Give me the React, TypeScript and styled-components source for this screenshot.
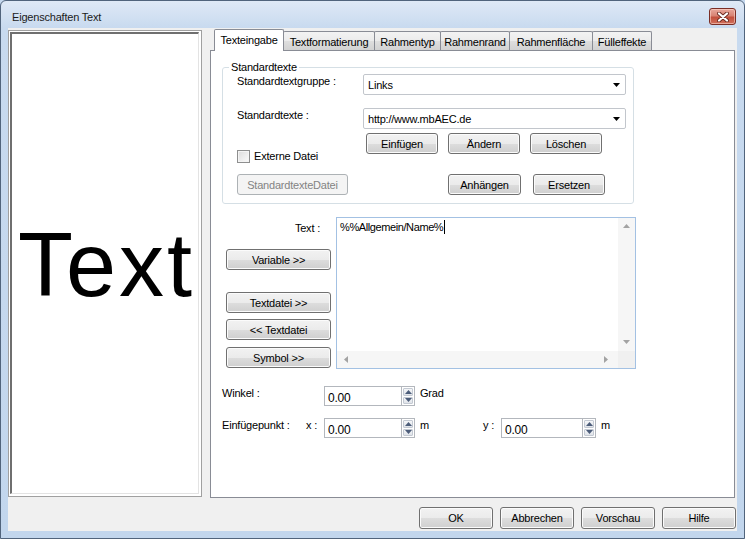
import React from 'react'
import styled, { createGlobalStyle } from 'styled-components'

const GlobalStyle = createGlobalStyle`
  html, body {
    margin: 0;
    padding: 0;
    background: #c5d8ee;
  }
  body {
    font-family: "Liberation Sans", Arial, sans-serif;
    font-size: 11px;
    letter-spacing: -0.2px;
    color: #000;
  }
  * { box-sizing: border-box; }
`

const tabs = [
  { name: 'Texteingabe', width: 70 },
  { name: 'Textformatierung', width: 92 },
  { name: 'Rahmentyp', width: 67 },
  { name: 'Rahmenrand', width: 70 },
  { name: 'Rahmenfläche', width: 84 },
  { name: 'Fülleffekte', width: 60 },
]

function Arrow({ dir, color = '#000' }: { dir: 'up' | 'down' | 'left' | 'right'; color?: string }) {
  const pts = {
    down: '0,0 7,0 3.5,4',
    up: '0,4 7,4 3.5,0',
    left: '4,0 4,7 0,3.5',
    right: '0,0 0,7 4,3.5',
  }[dir]
  const vertical = dir === 'up' || dir === 'down'
  return (
    <svg width={vertical ? 7 : 4} height={vertical ? 4 : 7} viewBox={vertical ? '0 0 7 4' : '0 0 4 7'}>
      <polygon points={pts} fill={color} />
    </svg>
  )
}

function Combo({ value }: { value: string }) {
  return (
    <ComboBox>
      <span>{value}</span>
      <Arrow dir="down" />
    </ComboBox>
  )
}

function Spinner({ width }: { width: number }) {
  return (
    <SpinWrap>
      <SpinInput $w={width}>0.00</SpinInput>
      <SpinButtons>
        <SpinHalf>
          <Arrow dir="up" color="#4c5d7a" />
        </SpinHalf>
        <SpinHalf>
          <Arrow dir="down" color="#4c5d7a" />
        </SpinHalf>
      </SpinButtons>
    </SpinWrap>
  )
}

export default function App() {
  return (
    <>
      <GlobalStyle />
      <Window>
        <TitleBar>
          <Title>Eigenschaften Text</Title>
          <CloseButton>
            <svg width="12" height="10" viewBox="0 0 12 10">
              <path d="M2 1.5 L10 8.5 M10 1.5 L2 8.5" stroke="#6b2b22" strokeWidth="4" strokeLinecap="round" />
              <path d="M2 1.5 L10 8.5 M10 1.5 L2 8.5" stroke="#fff" strokeWidth="2.2" strokeLinecap="round" />
            </svg>
          </CloseButton>
        </TitleBar>

        <Client>
          <MainRow>
            <PreviewFrame>
              <PreviewCanvas>
                <PreviewText>Text</PreviewText>
              </PreviewCanvas>
            </PreviewFrame>

            <TabControl>
              <TabStrip>
                {tabs.map((t, i) => (
                  <Tab key={t.name} $w={t.width} $active={i === 0} $first={i === 0}>
                    {t.name}
                  </Tab>
                ))}
              </TabStrip>

              <TabBody>
                <GroupBox>
                  <GroupTitle>Standardtexte</GroupTitle>
                  <FieldRow>
                    <FieldLabel>Standardtextgruppe :</FieldLabel>
                    <Combo value="Links" />
                  </FieldRow>
                  <FieldRow $gap={13}>
                    <FieldLabel>Standardtexte :</FieldLabel>
                    <Combo value="http://www.mbAEC.de" />
                  </FieldRow>
                  <LowerBlock>
                    <LeftCol>
                      <CheckRow>
                        <CheckBox />
                        <span>Externe Datei</span>
                      </CheckRow>
                      <Button $w={111} $mt={11} disabled>
                        StandardtexteDatei
                      </Button>
                    </LeftCol>
                    <RightCol>
                      <ButtonRow $gap={10}>
                        <Button $w={72}>Einfügen</Button>
                        <Button $w={72}>Ändern</Button>
                        <Button $w={72}>Löschen</Button>
                      </ButtonRow>
                      <ButtonRow $gap={12} $indent={82} $mt={20}>
                        <Button $w={73}>Anhängen</Button>
                        <Button $w={72}>Ersetzen</Button>
                      </ButtonRow>
                    </RightCol>
                  </LowerBlock>
                </GroupBox>

                <TextSection>
                  <TextButtons>
                    <TextLabel>Text :</TextLabel>
                    <Button $w={105} $mt={14}>Variable &gt;&gt;</Button>
                    <Button $w={105} $mt={22}>Textdatei &gt;&gt;</Button>
                    <Button $w={105} $mt={6}>&lt;&lt; Textdatei</Button>
                    <Button $w={105} $mt={7}>Symbol &gt;&gt;</Button>
                  </TextButtons>
                  <TextArea>
                    <TextContent>
                      %%Allgemein/Name%<Caret />
                    </TextContent>
                    <VScroll>
                      <Arrow dir="up" color="#a3a3a3" />
                      <Arrow dir="down" color="#a3a3a3" />
                    </VScroll>
                    <HScroll>
                      <Arrow dir="left" color="#a3a3a3" />
                      <Arrow dir="right" color="#a3a3a3" />
                    </HScroll>
                    <ScrollCorner />
                  </TextArea>
                </TextSection>

                <SpinSection>
                  <SpinRow>
                    <RowLabel $w={102}>Winkel :</RowLabel>
                    <Spinner width={77} />
                    <Unit>Grad</Unit>
                  </SpinRow>
                  <SpinRow $mt={12}>
                    <RowLabel $w={84}>Einfügepunkt :</RowLabel>
                    <RowLabel $w={18}>x :</RowLabel>
                    <Spinner width={77} />
                    <Unit $w={63}>m</Unit>
                    <RowLabel $w={18}>y :</RowLabel>
                    <Spinner width={81} />
                    <Unit>m</Unit>
                  </SpinRow>
                </SpinSection>
              </TabBody>
            </TabControl>
          </MainRow>

          <Footer>
            <Button $w={74} $h={22}>OK</Button>
            <Button $w={74} $h={22}>Abbrechen</Button>
            <Button $w={74} $h={22}>Vorschau</Button>
            <Button $w={74} $h={22}>Hilfe</Button>
          </Footer>
        </Client>
      </Window>
    </>
  )
}

const Window = styled.div`
  width: 745px;
  height: 539px;
  border: 1px solid #51647c;
  border-radius: 6px 6px 0 0;
  background: linear-gradient(#dfe9f6 0px, #c8daef 27px, #c2d6ed 100%);
  display: flex;
  flex-direction: column;
  overflow: hidden;
`

const TitleBar = styled.div`
  height: 27px;
  flex-shrink: 0;
  display: flex;
  align-items: center;
  justify-content: space-between;
  padding: 5px 8px 0 11px;
`

const Title = styled.div`
  font-size: 11px;
  color: #1b1b1b;
`

const CloseButton = styled.div`
  width: 27px;
  height: 17px;
  border: 1px solid #7b2e25;
  border-radius: 3px;
  background: linear-gradient(#e8a89c 0%, #d88373 45%, #c2503d 55%, #d0705c 100%);
  box-shadow: inset 0 0 0 1px rgba(255, 220, 210, 0.55);
  display: flex;
  align-items: center;
  justify-content: center;
  margin-top: -1px;
`

const Client = styled.div`
  flex: 1;
  margin: 0 7px 7px 7px;
  background: #f0f0f0;
  display: flex;
  flex-direction: column;
`

const MainRow = styled.div`
  display: flex;
  align-items: flex-start;
  gap: 8px;
  padding-top: 1px;
`

const PreviewFrame = styled.div`
  width: 194px;
  height: 467px;
  margin-top: 1px;
  border: 1px solid #a0a0a0;
  background: #fff;
  padding: 1px 2px 2px 1px;
  display: flex;
`

const PreviewCanvas = styled.div`
  flex: 1;
  border-style: solid;
  border-width: 2px 1px 1px 2px;
  border-color: #6f6f6f #e3e3e3 #e3e3e3 #6f6f6f;
  background: #fff;
  display: flex;
  align-items: center;
  justify-content: center;
  overflow: hidden;
`

const PreviewText = styled.div`
  font-size: 90px;
  line-height: 1;
  letter-spacing: 3px;
  margin: 2px 0 0 3px;
  white-space: nowrap;
`

const TabControl = styled.div`
  width: 525px;
  height: 469px;
  display: flex;
  flex-direction: column;
`

const TabStrip = styled.div`
  height: 21px;
  display: flex;
  align-items: flex-end;
  padding-left: 4px;
`

const Tab = styled.div<{ $w: number; $active?: boolean; $first?: boolean }>`
  position: relative;
  z-index: ${(p) => (p.$active ? 2 : 1)};
  width: ${(p) => p.$w}px;
  height: ${(p) => (p.$active ? 22 : 19)}px;
  margin-bottom: ${(p) => (p.$active ? -1 : 0)}px;
  margin-left: ${(p) => (p.$first ? 0 : -1)}px;
  border: 1px solid #898c95;
  border-bottom: none;
  border-radius: 2px 2px 0 0;
  padding-top: 3px;
  line-height: 14px;
  text-align: center;
  white-space: nowrap;
  background: ${(p) =>
    p.$active ? '#fff' : 'linear-gradient(#f3f3f3 0%, #ebebeb 50%, #dedede 51%, #d2d2d2 100%)'};
`

const TabBody = styled.div`
  flex: 1;
  border: 1px solid #898c95;
  background: #fff;
  padding: 16px 0 0 11px;
  display: flex;
  flex-direction: column;
`

const GroupBox = styled.div`
  width: 412px;
  border: 1px solid #d5dfe5;
  border-radius: 3px;
  padding: 0 0 8px 14px;
`

const GroupTitle = styled.div`
  width: fit-content;
  margin: -8px 0 0 -8px;
  padding: 0 2px;
  line-height: 14px;
  background: #fff;
`

const FieldRow = styled.div<{ $gap?: number }>`
  display: flex;
  align-items: flex-start;
  margin-top: ${(p) => p.$gap ?? 0}px;
`

const FieldLabel = styled.div`
  width: 126px;
  line-height: 14px;
`

const ComboBox = styled.div`
  width: 263px;
  height: 21px;
  border: 1px solid #c2c6cc;
  border-radius: 2px;
  background: #fff;
  display: flex;
  align-items: center;
  justify-content: space-between;
  padding: 0 5px 0 4px;
`

const LowerBlock = styled.div`
  display: flex;
  margin-top: 4px;
`

const LeftCol = styled.div`
  width: 126px;
  display: flex;
  flex-direction: column;
  align-items: flex-start;
`

const RightCol = styled.div`
  display: flex;
  flex-direction: column;
  padding-left: 3px;
`

const ButtonRow = styled.div<{ $gap: number; $indent?: number; $mt?: number }>`
  display: flex;
  gap: ${(p) => p.$gap}px;
  padding-left: ${(p) => p.$indent ?? 0}px;
  margin-top: ${(p) => p.$mt ?? 0}px;
`

const CheckRow = styled.div`
  display: flex;
  align-items: center;
  gap: 4px;
  margin-top: 17px;
  line-height: 13px;
`

const CheckBox = styled.div`
  width: 13px;
  height: 13px;
  border: 1px solid #8e8f8f;
  background: linear-gradient(135deg, #dcdcdc, #fbfbfb);
  box-shadow: inset 0 0 0 1px #f4f4f4;
`

const Button = styled.button<{ $w: number; $h?: number; $mt?: number }>`
  width: ${(p) => p.$w}px;
  height: ${(p) => p.$h ?? 21}px;
  margin-top: ${(p) => p.$mt ?? 0}px;
  padding: 0;
  font-family: "Liberation Sans", Arial, sans-serif;
  font-size: 11px;
  letter-spacing: -0.2px;
  color: #000;
  border: 1px solid #707070;
  border-radius: 3px;
  background: linear-gradient(#f2f2f2 0%, #ebebeb 50%, #dddddd 51%, #cfcfcf 100%);
  box-shadow: inset 0 0 0 1px #fbfbfb;
  flex-shrink: 0;

  &:disabled {
    color: #838383;
    border-color: #adb2b5;
    background: #f4f4f4;
    box-shadow: none;
  }
`

const TextSection = styled.div`
  display: flex;
  gap: 5px;
  margin-top: 13px;
  padding-left: 4px;
`

const TextButtons = styled.div`
  width: 105px;
  display: flex;
  flex-direction: column;
`

const TextLabel = styled.div`
  margin-top: 4px;
  padding-right: 11px;
  line-height: 14px;
  text-align: right;
`

const TextArea = styled.div`
  width: 300px;
  height: 152px;
  border: 1px solid #a3c1e3;
  display: grid;
  grid-template-columns: 1fr 17px;
  grid-template-rows: 1fr 17px;
  background: #fff;
`

const TextContent = styled.div`
  padding: 2px 3px;
  line-height: 14px;
  font-size: 11px;
  letter-spacing: -0.4px;
  display: flex;
  align-items: center;
  align-self: start;
`

const Caret = styled.span`
  display: inline-block;
  width: 1px;
  height: 14px;
  background: #000;
  margin-left: 1px;
`

const VScroll = styled.div`
  background: #f6f6f6;
  display: flex;
  flex-direction: column;
  align-items: center;
  justify-content: space-between;
  padding: 6px 0 7px;
`

const HScroll = styled.div`
  background: #f6f6f6;
  display: flex;
  align-items: center;
  justify-content: space-between;
  padding: 0 10px 0 7px;
`

const ScrollCorner = styled.div`
  background: #f0f0f0;
`

const SpinSection = styled.div`
  display: flex;
  flex-direction: column;
  margin-top: 17px;
`

const SpinRow = styled.div<{ $mt?: number }>`
  display: flex;
  align-items: flex-start;
  margin-top: ${(p) => p.$mt ?? 0}px;
`

const RowLabel = styled.div<{ $w: number }>`
  width: ${(p) => p.$w}px;
  line-height: 14px;
  white-space: nowrap;
`

const Unit = styled.div<{ $w?: number }>`
  width: ${(p) => (p.$w ? `${p.$w}px` : 'auto')};
  margin-left: 5px;
  line-height: 14px;
`

const SpinWrap = styled.div`
  display: flex;
  height: 20px;
`

const SpinInput = styled.div<{ $w: number }>`
  width: ${(p) => p.$w}px;
  height: 20px;
  border: 1px solid #b3b7bd;
  border-right: none;
  background: #fff;
  padding: 4px 0 0 3px;
  font-size: 12px;
  line-height: 14px;
`

const SpinButtons = styled.div`
  width: 14px;
  display: flex;
  flex-direction: column;
  border: 1px solid #b3b7bd;
  background: #fff;
  padding: 1px;
  gap: 1px;
`

const SpinHalf = styled.div`
  flex: 1;
  border: 1px solid #c3c9d2;
  border-radius: 1px;
  background: linear-gradient(#f5f6f8, #dfe3e9);
  display: flex;
  align-items: center;
  justify-content: center;
`

const Footer = styled.div`
  display: flex;
  justify-content: flex-end;
  gap: 7px;
  margin-top: 9px;
  padding-right: 1px;
`
